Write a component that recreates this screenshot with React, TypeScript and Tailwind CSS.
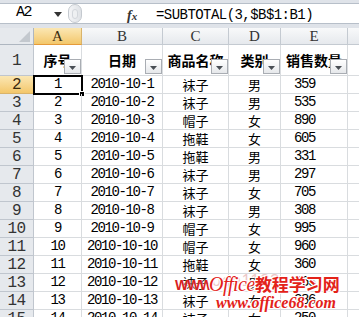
import React from "react";

const rows: [string, string, string, string, string][] = [
  ["1", "2010-10-1", "袜子", "男", "359"],
  ["2", "2010-10-2", "袜子", "男", "535"],
  ["3", "2010-10-3", "帽子", "女", "890"],
  ["4", "2010-10-4", "拖鞋", "女", "605"],
  ["5", "2010-10-5", "拖鞋", "男", "331"],
  ["6", "2010-10-6", "袜子", "男", "297"],
  ["7", "2010-10-7", "袜子", "女", "705"],
  ["8", "2010-10-8", "袜子", "男", "308"],
  ["9", "2010-10-9", "帽子", "女", "995"],
  ["10", "2010-10-10", "帽子", "女", "960"],
  ["11", "2010-10-11", "拖鞋", "女", "360"],
  ["12", "2010-10-12", "袜子", "男", "363"],
  ["13", "2010-10-13", "袜子", "女", "286"],
  ["14", "2010-10-14", "袜子", "女", "250"],
];

const headers = ["序号", "日期", "商品名称", "类别", "销售数量"];
const letters = ["A", "B", "C", "D", "E"];

function DropBtn() {
  return (
    <div className="absolute right-0 bottom-[1px] w-[17px] h-[15px] border border-[#a9adb3] bg-gradient-to-b from-white to-[#e6e8eb] flex items-center justify-center">
      <svg width="7" height="4" viewBox="0 0 7 4" className="mt-[2px]">
        <path d="M0 0 L7 0 L3.5 4 Z" fill="#4a4f55" />
      </svg>
    </div>
  );
}

export default function App() {
  const mono = "font-['Liberation_Mono',monospace]";
  const cjk = "font-['Noto_Sans_CJK_SC',sans-serif]";
  return (
    <div className="relative w-[359px] h-[317px] overflow-hidden bg-white">
      {/* formula bar */}
      <div className="h-[28px] bg-[#dfe3e9] pt-[3px]">
        <div className="h-[21px] bg-white border-y border-[#b7bfc9] flex items-center relative">
          <div className="w-[66px] h-full flex items-center relative">
            <span className={`${mono} text-[15px] tracking-[-1.5px] text-black pl-[16px]`}>A2</span>
            <svg width="8" height="5" viewBox="0 0 8 5" className="absolute left-[54px] top-[8px]">
              <path d="M0 0 L8 0 L4 5 Z" fill="#333" />
            </svg>
          </div>
          <div className="w-[14px] h-[19px] rounded-full border border-[#c4c9cf] bg-gradient-to-r from-[#f4f5f7] to-[#dfe2e6] ml-[2px] flex items-center justify-center">
            <div className="w-[6px] h-[10px] rounded-full bg-[#eef0f2] border border-[#d3d7dc]" />
          </div>
          <span className="absolute left-[127px] top-[1px] font-['Liberation_Serif',serif] italic font-bold text-[14px] text-[#333]">
            f<span className="text-[11px]">x</span>
          </span>
          <span className={`absolute left-[156px] top-[1px] ${mono} text-[14px] tracking-[-0.55px] text-black`}>
            =SUBTOTAL(3,$B$1:B1)
          </span>
        </div>
      </div>

      {/* grid */}
      <div className="grid grid-cols-[34px_48px_81px_66px_52px_67px_1fr]">
        {/* header row */}
        <div className="h-[17px] bg-[#e6e9ed] border-r border-b border-[#aeb6c0] relative">
          <svg width="11" height="11" viewBox="0 0 11 11" className="absolute right-[3px] bottom-[2px]">
            <path d="M11 0 L11 11 L0 11 Z" fill="#c3c8ce" />
          </svg>
        </div>
        {letters.map((l, i) => (
          <div
            key={l}
            className={`h-[17px] border-r border-b flex items-center justify-center font-['Liberation_Serif',serif] text-[15px] ${
              i === 0
                ? "bg-gradient-to-b from-[#fbe7b3] to-[#f3c76a] border-r-[#d9b36a] border-b-[#e59a3a] text-[#3b2c10]"
                : "bg-gradient-to-b from-[#f8f9fa] to-[#e6e9ed] border-[#c4cad1] text-[#333]"
            }`}
          >
            {l}
          </div>
        ))}
        <div className="h-[17px] bg-gradient-to-b from-[#f8f9fa] to-[#e6e9ed] border-b border-[#c4cad1]" />

        {/* row 1 */}
        <div className={`h-[31px] bg-[#e6e9ed] border-r border-b border-[#c0c6ce] flex items-end justify-center pb-[2px] ${mono} text-[16px] tracking-[-0.5px] text-[#333]`}>
          1
        </div>
        {headers.map((h) => (
          <div key={h} className="h-[31px] relative border-r border-b border-[#d9dcdf] flex items-center justify-center">
            <span className={`${cjk} font-bold text-[14px] text-black whitespace-nowrap`}>{h}</span>
            <DropBtn />
          </div>
        ))}
        <div className="h-[31px] border-b border-[#d9dcdf]" />

        {/* data rows */}
        {rows.map((r, ri) => {
          const rowNum = ri + 2;
          const sel = rowNum === 2;
          return (
            <React.Fragment key={ri}>
              <div
                className={`h-[18px] border-r border-b flex items-center justify-center ${mono} text-[16px] tracking-[-0.5px] ${
                  sel
                    ? "bg-gradient-to-b from-[#fbe7b3] to-[#f3c76a] border-r-[#e59a3a] border-b-[#d9b36a] text-[#3b2c10]"
                    : "bg-[#e6e9ed] border-[#c0c6ce] text-[#333]"
                }`}
              >
                {rowNum}
              </div>
              <div className={`h-[18px] relative border-r border-b border-[#d9dcdf] flex items-center justify-center ${mono} text-[14px] tracking-[-1.4px] text-black`}>
                {r[0]}
                {sel && (
                  <>
                    <div className="absolute -left-[1px] -top-[1px] w-[50px] h-[20px] border-2 border-black" />
                    <div className="absolute -right-[4px] -bottom-[4px] w-[6px] h-[6px] bg-black border border-white" />
                  </>
                )}
              </div>
              <div className={`h-[18px] border-r border-b border-[#d9dcdf] flex items-center justify-center ${mono} text-[14px] tracking-[-1.4px] text-black`}>
                {r[1]}
              </div>
              <div className={`h-[18px] border-r border-b border-[#d9dcdf] flex items-center justify-center ${cjk} text-[13px] text-black`}>
                {r[2]}
              </div>
              <div className={`h-[18px] border-r border-b border-[#d9dcdf] flex items-center justify-center ${cjk} text-[13px] text-black`}>
                {r[3]}
              </div>
              <div className={`h-[18px] border-r border-b border-[#d9dcdf] flex items-center justify-center pr-[19px] ${mono} text-[14px] tracking-[-1.4px] text-black`}>
                {r[4]}
              </div>
              <div className="h-[18px] border-b border-[#d9dcdf]" />
            </React.Fragment>
          );
        })}
      </div>

      {/* watermark */}
      <div className="absolute left-[212px] top-[269px] font-['Liberation_Sans',sans-serif] text-[16px] text-[#e9b9b9] opacity-80 tracking-[1px]">
        ooo1123
      </div>
      <div className="absolute left-[175px] top-[275px] font-['Liberation_Sans',sans-serif] font-bold text-[14px] text-[#d8221f] tracking-[-1px] [text-shadow:0_0_2px_#fff]">
        WWW.
      </div>
      <div className="absolute left-[209px] top-[273px] flex items-end text-[#e32219] [text-shadow:-1px_-1px_0_#fff,1px_-1px_0_#fff,-1px_1px_0_#fff,1px_1px_0_#fff]">
        <span className="font-['Liberation_Serif',serif] italic text-[20px] leading-[22px] tracking-[-0.5px]">Office</span>
        <span className={`${cjk} font-bold text-[17px] leading-[22px]`}>教程学习网</span>
      </div>
      <div className="absolute left-[216px] top-[294px] font-['Liberation_Serif',serif] italic font-bold text-[16px] leading-[18px] text-[#e32219] [text-shadow:-1px_-1px_0_#fff,1px_-1px_0_#fff,-1px_1px_0_#fff,1px_1px_0_#fff]">
        www.office68.com
      </div>
    </div>
  );
}
